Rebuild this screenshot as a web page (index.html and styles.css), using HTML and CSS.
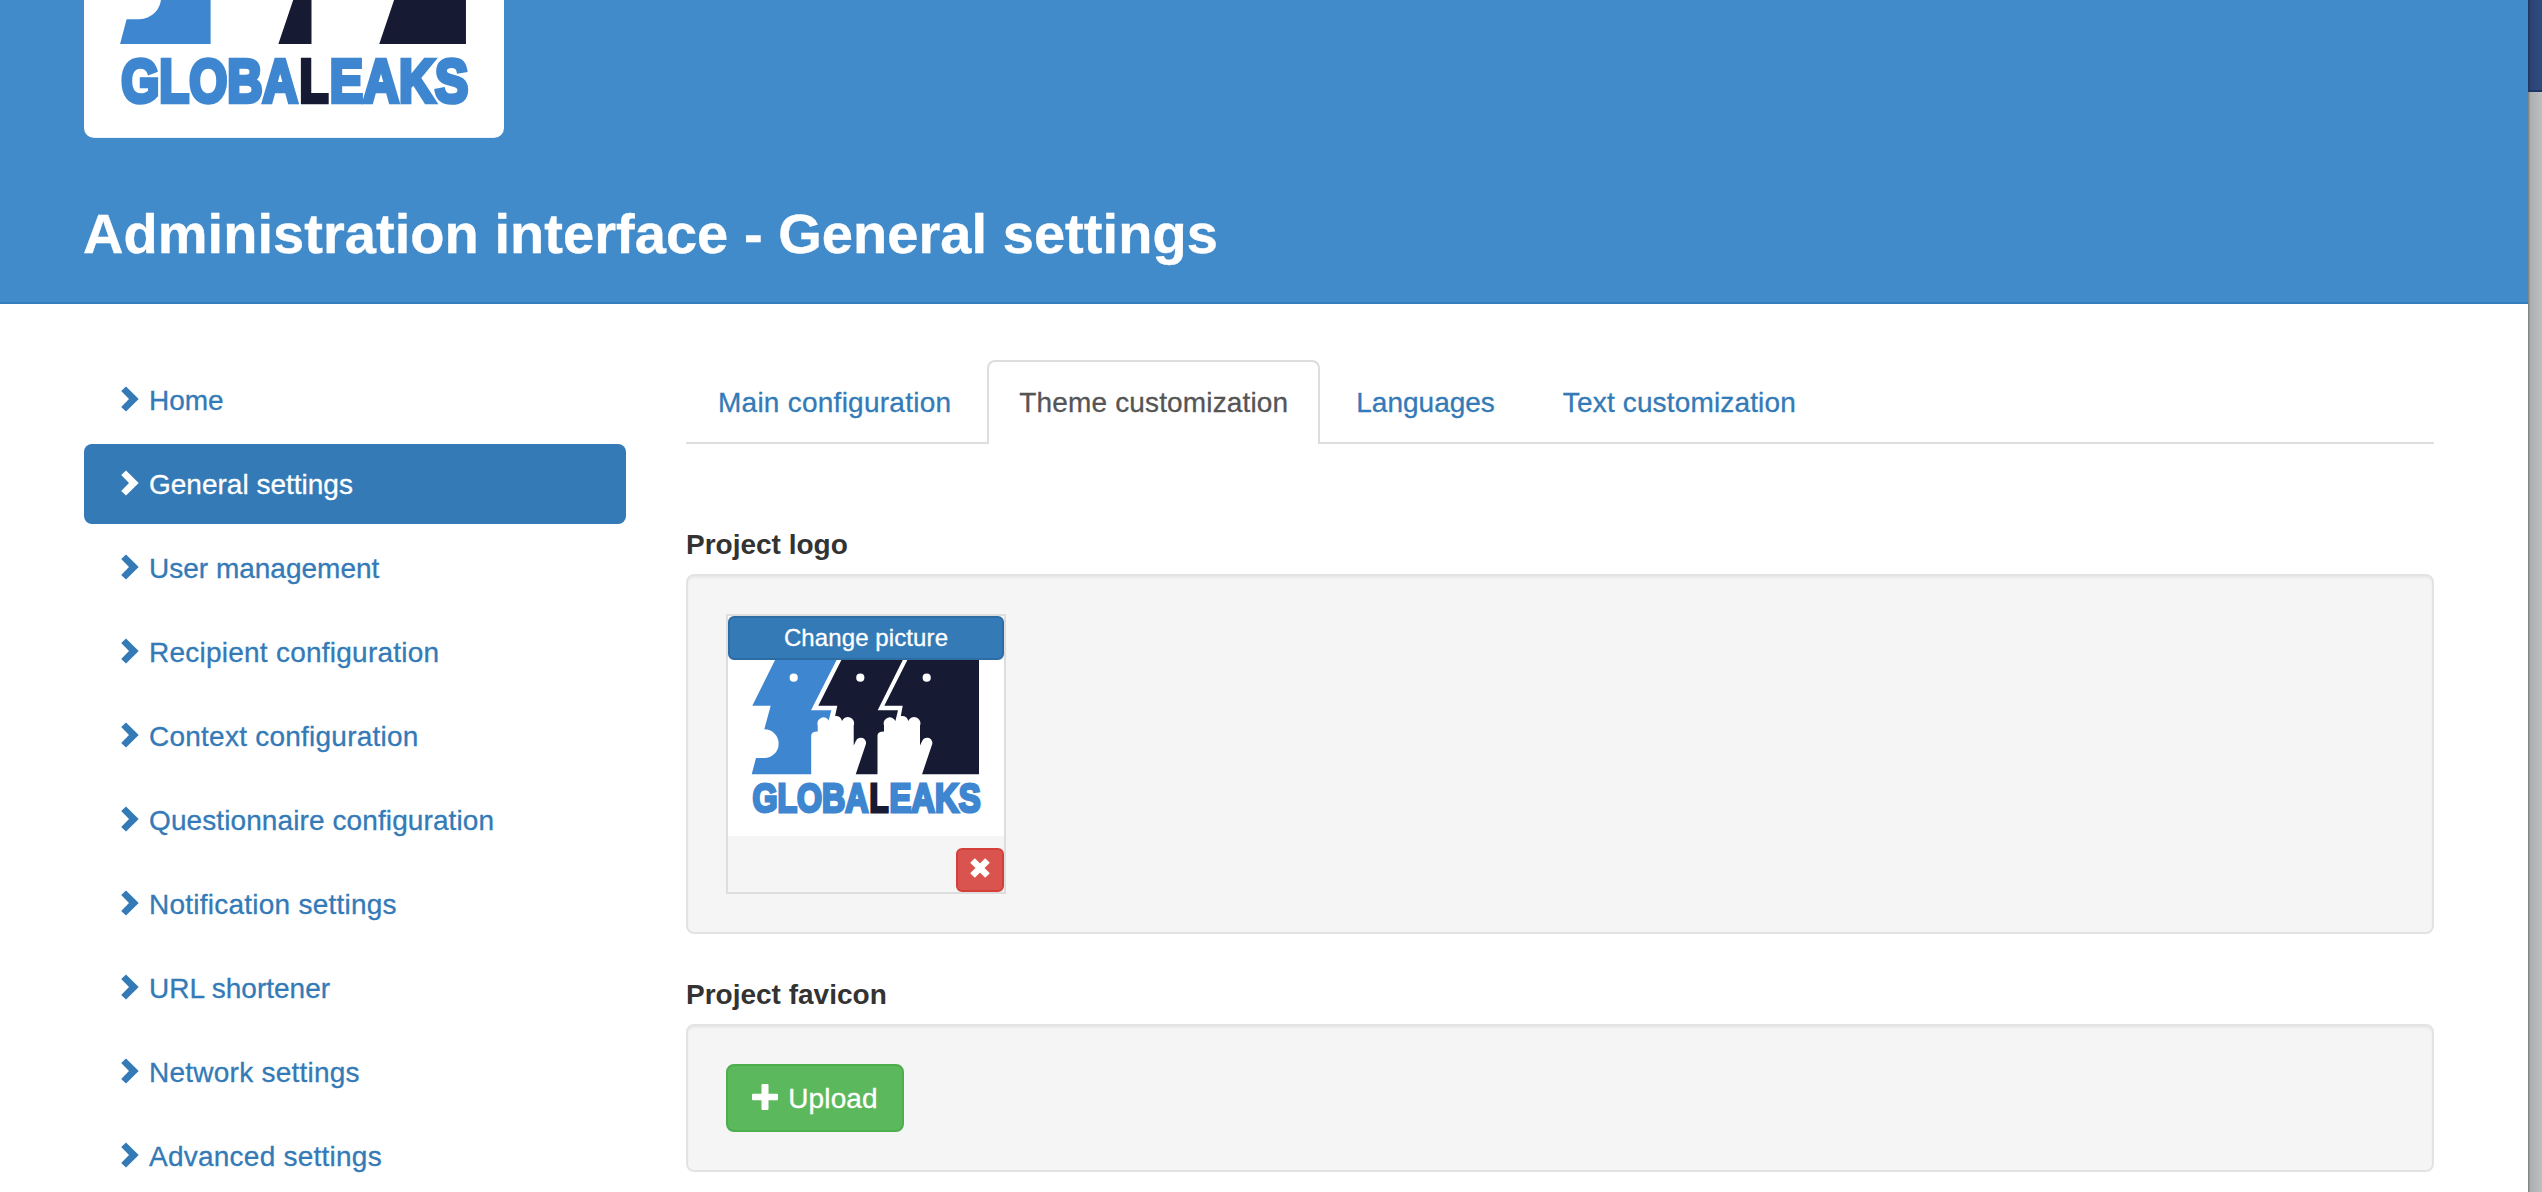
FILE: index.html
```html
<!DOCTYPE html>
<html lang="en">
<head>
<meta charset="utf-8">
<title>Administration interface - General settings</title>
<link rel="stylesheet" href="styles.css">
</head>
<body>
<svg class="defs" width="0" height="0">
  <symbol id="logo" viewBox="0 0 276 220">
    <rect width="276" height="220" fill="#fff"/>
    <path fill="#3e86d0" d="M59.500 19H121.300L83 94.300H103.300L98 115V158.300H23.700L28 142H36.300A14.300 14.300 0 0 0 36.300 113.300L42.700 89.700H24.300Z"/>
    <path fill="#161a33" d="M126 19H187.300L149.700 94.300H170L165 115L150 158.300H127L105 110L109.300 89.700H90.300Z"/>
    <path fill="#161a33" d="M192 19H251V158.300H193L171 110L174.700 89.700H156.300Z"/>
    <path id="palm" fill="#fff" d="M83.200 159V119.500Q83.200 115.600 89.700 115.600V109.500A5.700 5.700 0 0 1 101.300 105.500A6.500 6.500 0 0 1 114 105A5.800 5.800 0 0 1 125.700 109.500V129.500L128 124.800A5 5 0 0 1 137.600 129L127.500 159Z"/>
    <use href="#palm" x="66.300"/>
    <g fill="#fff"><circle cx="65.700" cy="61.700" r="4.100"/><circle cx="132.300" cy="61.700" r="4.100"/><circle cx="198.700" cy="61.700" r="4.100"/></g>
    <g class="wordmark">
      <text x="24.500" y="196.300" textLength="116" lengthAdjust="spacingAndGlyphs">GLOBA</text>
      <text class="dark" x="141.600" y="196.300" textLength="19" lengthAdjust="spacingAndGlyphs">L</text>
      <text x="161.500" y="196.300" textLength="91" lengthAdjust="spacingAndGlyphs">EAKS</text>
    </g>
  </symbol>
  <symbol id="chevron" viewBox="0 0 18 26"><path fill="currentColor" d="M5 .5L17.700 13L5 25.500L.200 21L8 13L.200 5Z"/></symbol>
</svg>
<div class="page">
  <div class="main">
    <header class="header">
      <svg class="header-logo"><use href="#logo"/></svg>
      <h1>Administration interface - General settings</h1>
    </header>
    <div class="columns">
      <nav class="menu">
        <a><svg><use href="#chevron"/></svg><span>Home</span></a>
        <a class="active"><svg><use href="#chevron"/></svg><span>General settings</span></a>
        <a><svg><use href="#chevron"/></svg><span>User management</span></a>
        <a class="loose"><svg><use href="#chevron"/></svg><span>Recipient configuration</span></a>
        <a class="loose"><svg><use href="#chevron"/></svg><span>Context configuration</span></a>
        <a class="semi"><svg><use href="#chevron"/></svg><span>Questionnaire configuration</span></a>
        <a class="loose"><svg><use href="#chevron"/></svg><span>Notification settings</span></a>
        <a><svg><use href="#chevron"/></svg><span>URL shortener</span></a>
        <a class="loose"><svg><use href="#chevron"/></svg><span>Network settings</span></a>
        <a class="loose"><svg><use href="#chevron"/></svg><span>Advanced settings</span></a>
      </nav>
      <section class="content">
        <div class="tabs">
          <a class="loose">Main configuration</a><a class="active">Theme customization</a><a class="tight">Languages</a><a>Text customization</a>
        </div>
        <label>Project logo</label>
        <div class="well">
          <div class="thumb">
            <svg class="thumb-logo"><use href="#logo"/></svg>
            <button class="btn change">Change picture</button>
            <button class="btn remove"><svg width="20" height="20" viewBox="0 0 20 20"><path d="M2.500 2.500L17.500 17.500M17.500 2.500L2.500 17.500" stroke="#fff" stroke-width="6.600"/></svg></button>
          </div>
        </div>
        <label>Project favicon</label>
        <div class="well">
          <button class="btn upload"><svg width="26" height="26" viewBox="0 0 26 26"><path fill="#fff" d="M10.500 0h5q1 0 1 1v8.700h8.500q1 0 1 1v4.600q0 1-1 1h-8.500v8.700q0 1-1 1h-5q-1 0-1-1v-8.700H1q-1 0-1-1v-4.600q0-1 1-1h8.500V1q0-1 1-1Z"/></svg><span>Upload</span></button>
        </div>
      </section>
    </div>
  </div>
  <aside class="edge"><div class="edge-top"></div><div class="edge-rest"></div></aside>
</div>
</body>
</html>
```
FILE: styles.css
```css
* { box-sizing: border-box; }
body {
  margin: 0;
  overflow: hidden;
  background: #fff;
  color: #333;
  font: 28px/40px "Liberation Sans", Arial, sans-serif;
}
.defs { display: none; }
.page { display: flex; width: 2542px; height: 1192px; overflow: hidden; }
.main { width: 2528px; }
.header {
  height: 304px;
  padding: 0 84px;
  overflow: hidden;
  background: #428bca;
  border-bottom: 2px solid #357ebd;
}
.header-logo {
  display: block;
  width: 420px;
  height: 335px;
  margin-top: -197px;
  border-radius: 10px;
}
.header h1 {
  width: max-content;
  margin: 65px 0 0 -1px;
  color: #fff;
  font-size: 56px;
  line-height: 62px;
  letter-spacing: .05px;
  -webkit-text-stroke: .4px;
}
.wordmark {
  font: bold 40px "Liberation Sans", Arial, sans-serif;
  fill: #3e86d0;
  stroke: #3e86d0;
  stroke-width: 3px;
}
.wordmark .dark { fill: #161a33; stroke: #161a33; }

.columns { display: flex; gap: 60px; padding: 56px 94px 0 84px; }
.menu { display: flex; flex-direction: column; gap: 4px; width: 542px; }
.menu a {
  display: flex;
  gap: 11px;
  height: 80px;
  padding: 21px 36px 19px 37px;
  border-radius: 8px;
  color: #337ab7;
}
.menu a, .tabs a, .btn { -webkit-text-stroke: .3px; }
.menu svg { width: 18px; height: 26px; margin-top: 5px; }
.menu span { margin-left: -1px; }
.menu .active { background: #337ab7; color: #fff; }
.menu .loose { letter-spacing: .24px; }
.menu .semi { letter-spacing: .1px; }

.content { flex: 1; }
.tabs { display: flex; gap: 4px; height: 84px; margin-bottom: 81px; border-bottom: 2px solid #ddd; }
.tabs a {
  height: 84px;
  padding: 21px 30px 19px;
  border: 2px solid transparent;
  border-bottom: 0;
  border-radius: 8px 8px 0 0;
  color: #337ab7;
  letter-spacing: .15px;
}
.tabs .loose { letter-spacing: .25px; }
.tabs .tight { letter-spacing: 0; }
.tabs .active { background: #fff; border-color: #ddd; color: #555; }
.content label { display: block; height: 40px; margin-bottom: 9px; font-weight: bold; }
.well {
  margin-bottom: 41px;
  padding: 38px;
  border: 2px solid #e3e3e3;
  border-radius: 8px;
  background: #f5f5f5;
  box-shadow: inset 0 2px 2px rgba(0, 0, 0, .05);
}
.thumb { position: relative; width: 280px; height: 280px; border: 2px solid #ddd; }
.thumb-logo { display: block; width: 276px; height: 220px; }
.btn {
  display: flex;
  align-items: center;
  justify-content: center;
  margin: 0;
  padding: 0;
  border: 2px solid;
  border-radius: 6px;
  color: #fff;
  font-family: inherit;
}
.change {
  position: absolute;
  top: 0;
  left: 0;
  width: 276px;
  height: 44px;
  background: #337ab7;
  border-color: #2e6da4;
  font-size: 24px;
  line-height: 36px;
  letter-spacing: .1px;
}
.remove {
  position: absolute;
  right: 0;
  bottom: 0;
  width: 48px;
  height: 44px;
  padding-bottom: 4px;
  background: #d9534f;
  border-color: #d43f3a;
}
.upload {
  gap: 10px;
  width: 178px;
  height: 68px;
  border-radius: 8px;
  background: #5cb85c;
  border-color: #4cae4c;
  font-size: 28px;
  letter-spacing: .15px;
}
.upload svg { margin-top: -2px; }
.upload span { margin-top: 1px; }
.edge { display: flex; flex-direction: column; width: 14px; }
.edge-top { height: 92px; background: linear-gradient(90deg, #22365f 0 1px, #2a4375 2px, #2f4b7f); border-bottom: 2px solid #1f3665; }
.edge-rest { flex: 1; background: linear-gradient(90deg, #858687 0 1px, #adaeb0 2px, #bebfc1); }
```
